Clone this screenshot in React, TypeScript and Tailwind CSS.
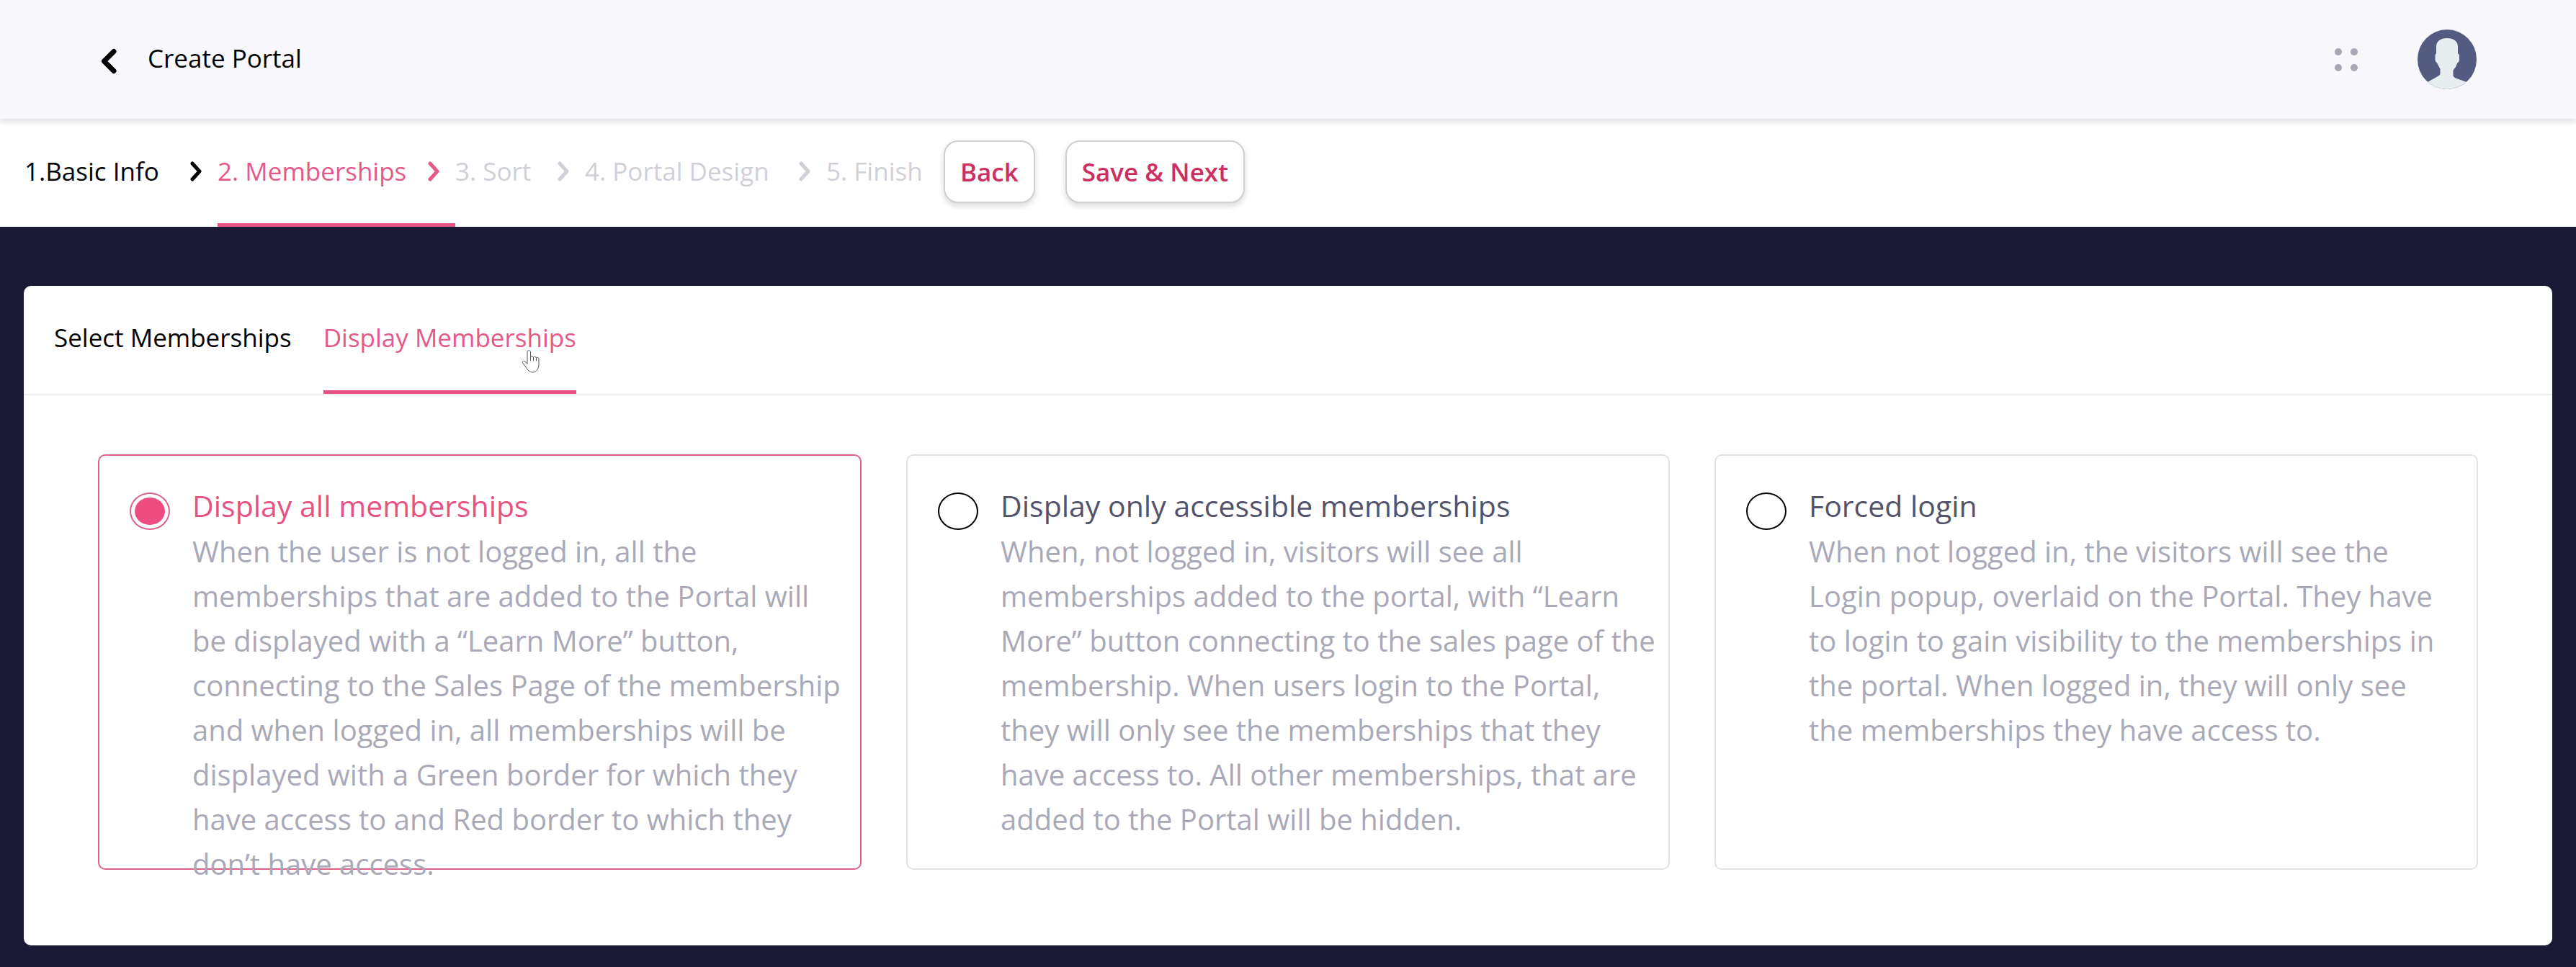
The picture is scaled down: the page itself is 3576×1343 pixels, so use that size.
import React, { useState } from "react";
import clsx from "clsx";

interface Step {
  label: string;
  width: string;
}

interface DisplayOption {
  id: string;
  title: string;
  description: string;
}

const steps: Step[] = [
  { label: "1.Basic Info", width: "w-[268px]" },
  { label: "2. Memberships", width: "w-[330px]" },
  { label: "3. Sort", width: "w-[180px]" },
  { label: "4. Portal Design", width: "w-[335px]" },
  { label: "5. Finish", width: "w-[163px]" },
];

const tabs = ["Select Memberships", "Display Memberships"];

const options: DisplayOption[] = [
  {
    id: "all",
    title: "Display all memberships",
    description: `When the user is not logged in, all the
memberships that are added to the Portal will
be displayed with a “Learn More” button,
connecting to the Sales Page of the membership
and when logged in, all memberships will be
displayed with a Green border for which they
have access to and Red border to which they
don’t have access.`,
  },
  {
    id: "accessible",
    title: "Display only accessible memberships",
    description: `When, not logged in, visitors will see all
memberships added to the portal, with “Learn
More” button connecting to the sales page of the
membership. When users login to the Portal,
they will only see the memberships that they
have access to. All other memberships, that are
added to the Portal will be hidden.`,
  },
  {
    id: "forced",
    title: "Forced login",
    description: `When not logged in, the visitors will see the
Login popup, overlaid on the Portal. They have
to login to gain visibility to the memberships in
the portal. When logged in, they will only see
the memberships they have access to.`,
  },
];

const StepChevron = () => (
  <svg
    viewBox="0 0 18 28"
    className="h-[28px] w-[18px]"
    fill="none"
    stroke="currentColor"
    strokeWidth="5"
    strokeLinecap="round"
    strokeLinejoin="round"
    aria-hidden="true"
  >
    <path d="M4 3 14 14 4 25" />
  </svg>
);

const Avatar = () => (
  <svg viewBox="0 0 82 83" className="h-[83px] w-[82px]" aria-hidden="true">
    <defs>
      <clipPath id="avatar-clip">
        <ellipse cx="41" cy="41.5" rx="41" ry="41.5" />
      </clipPath>
    </defs>
    <g clipPath="url(#avatar-clip)">
      <rect width="82" height="83" fill="#545b80" />
      <path
        d="M26 24c0-8 6-12 15-12s15 4 15 12v9.500c1.500 0 2 1.500 2 3.500v5c0 2.500-1.500 3-3 5l-2 5c-1 2-3 3-3.500 5v7c0 1.500 2 2.500 3.500 3.500L68 73v12H14V73l15-8.500c1.500-1 2.500-2 2.500-3.500v-6c-.5-2-2.500-4-3.500-7-1-2-3.500-3.500-3.500-6v-5c0-2 .5-3.500 1.500-3.500z"
        fill="#e6eef0"
      />
    </g>
  </svg>
);

const PointerHand = () => (
  <svg
    viewBox="0 0 25 32"
    className="pointer-events-none absolute left-[275px] top-[89px] h-[32px] w-[25px]"
    fill="#ffffff"
    stroke="#555555"
    strokeWidth="1"
    strokeLinejoin="round"
    strokeLinecap="round"
    aria-hidden="true"
  >
    <path d="M8 19V3c0-3 4.500-3 4.500 0v7c0-1.500 3.500-1.500 4 .5 0-1.500 3.500-1.500 4 .7 0-1.500 3.500-1.200 3.500 1.300V20c0 6-3 11-8.500 11-4.500 0-7-3-9-6.500L1.500 18c-1-2 1-3.500 3-2.200z" />
    <path d="M12.500 10v5M16.500 10.500V15M20.500 11.500V15" fill="none" />
  </svg>
);

export default function App() {
  const [activeTab, setActiveTab] = useState(1);
  const [selected, setSelected] = useState("all");
  const currentStep = 1;

  return (
    <div className="flex min-h-screen flex-col bg-[#1a1a37] font-['Open_Sans',sans-serif] text-[35px] leading-[48px] text-black">
      <header className="relative z-10 flex h-[165px] items-center justify-between bg-[#f8f8fc] px-[138px] shadow-[0_2px_8px_2px_rgba(0,0,0,0.12)]">
        <div className="flex items-center gap-[41px] pb-[4px]">
          <button type="button" aria-label="Go back" className="pt-[8px]">
            <svg
              viewBox="0 0 26 36"
              className="h-[36px] w-[26px]"
              fill="none"
              stroke="currentColor"
              strokeWidth="7"
              strokeLinecap="round"
              strokeLinejoin="round"
              aria-hidden="true"
            >
              <path d="M20 4.500 6.500 18 20 31.500" />
            </svg>
          </button>
          <h1>Create Portal</h1>
        </div>
        <div className="flex items-center gap-[83px]">
          <button type="button" aria-label="Apps">
            <svg viewBox="0 0 32 32" className="size-8" fill="#a8a7b5" aria-hidden="true">
              <circle cx="5" cy="5" r="5" />
              <circle cx="27" cy="5" r="5" />
              <circle cx="5" cy="27" r="5" />
              <circle cx="27" cy="27" r="5" />
            </svg>
          </button>
          <button type="button" aria-label="Account">
            <Avatar />
          </button>
        </div>
      </header>

      <nav className="flex h-[150px] items-center bg-white pl-[34px]">
        <ol className="flex h-full">
          {steps.map((step, index) => (
            <li
              key={step.label}
              className={clsx(
                "flex items-center justify-between border-b-[5px] pr-[21px]",
                step.width,
                index < currentStep && "border-transparent text-black",
                index === currentStep && "border-[#e65383] text-[#e35a88]",
                index > currentStep && "border-transparent text-[#d0d0d7]"
              )}
            >
              <span className="whitespace-nowrap">{step.label}</span>
              {index < steps.length - 1 && <StepChevron />}
            </li>
          ))}
        </ol>
        <div className="flex gap-[42px] pb-[3px] font-semibold text-[#cc2f60]">
          <button
            type="button"
            className="h-[87px] rounded-[20px] border-2 border-[#cfcfcf] bg-white px-[21px] shadow-[0_4px_8px_rgba(0,0,0,0.15)]"
          >
            Back
          </button>
          <button
            type="button"
            className="h-[87px] rounded-[20px] border-2 border-[#cfcfcf] bg-white px-[21px] shadow-[0_4px_8px_rgba(0,0,0,0.15)]"
          >
            Save &amp; Next
          </button>
        </div>
      </nav>

      <main className="mx-[33px] mb-[30px] mt-[82px] rounded-[10px] bg-white">
        <div role="tablist" className="flex h-[152px] gap-[44px] border-b-2 border-[#eeeef0] px-[42px]">
          {tabs.map((tab, index) => (
            <button
              key={tab}
              type="button"
              role="tab"
              aria-selected={index === activeTab}
              onClick={() => setActiveTab(index)}
              className={clsx(
                "relative border-b-[5px] pb-[2px]",
                index === activeTab
                  ? "border-[#e65383] text-[#e35a88]"
                  : "border-transparent text-black"
              )}
            >
              {tab}
              {index === 1 && <PointerHand />}
            </button>
          ))}
        </div>

        <div className="grid grid-cols-3 gap-[62px] px-[103px] pb-[105px] pt-[82px]">
          {options.map((option) => {
            const checked = option.id === selected;
            return (
              <label
                key={option.id}
                htmlFor={option.id}
                className={clsx(
                  "flex h-[577px] items-start gap-[31px] rounded-[10px] border-2 pl-[42px] pt-[38px]",
                  checked ? "border-[#dc6088]" : "border-[#e2e2e4]"
                )}
              >
                <input
                  id={option.id}
                  type="radio"
                  name="display"
                  checked={checked}
                  onChange={() => setSelected(option.id)}
                  className="mt-[13px] h-[52px] w-[56px] shrink-0 appearance-none rounded-[50%] border-2 border-black bg-clip-content p-[5px] checked:border-[#dc6088] checked:bg-[#ee4c80]"
                />
                <span className="flex flex-col gap-[2px] leading-[62px]">
                  <span
                    className={clsx(
                      "text-[41px] font-medium",
                      checked ? "text-[#e65383]" : "text-[#53536b]"
                    )}
                  >
                    {option.title}
                  </span>
                  <span className="whitespace-pre text-[40px] text-[#a9a9b8]">
                    {option.description}
                  </span>
                </span>
              </label>
            );
          })}
        </div>
      </main>
    </div>
  );
}
